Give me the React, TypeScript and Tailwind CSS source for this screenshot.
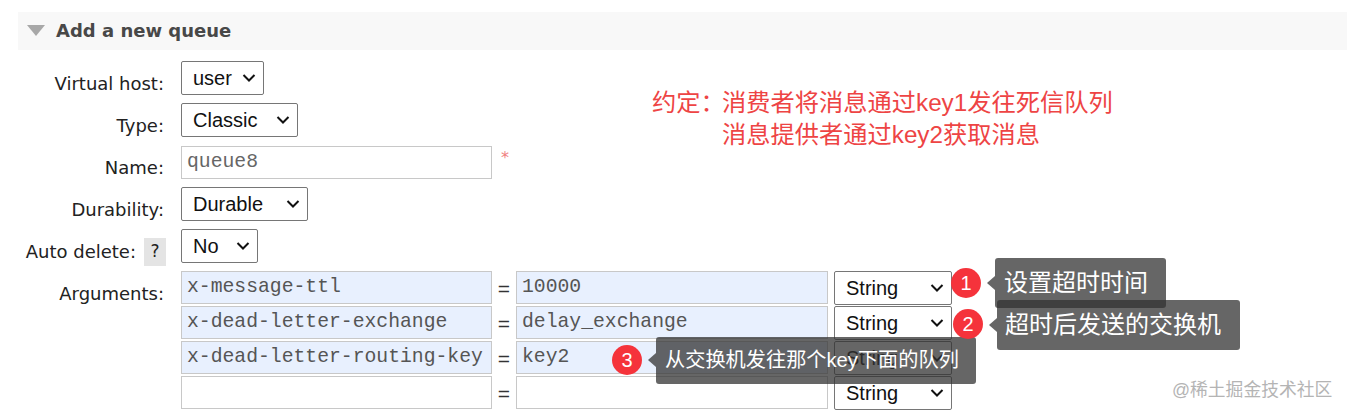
import React from 'react';

const SANS = 'font-["Liberation_Sans",Arial,sans-serif]';
const CJK = 'font-["Liberation_Sans","Noto_Sans_CJK_SC",sans-serif]';

const Select: React.FC<{ value: string; width: string }> = ({ value, width }) => (
  <div className={`flex h-[34px] ${width} items-center justify-between rounded-[2px] border border-[#767676] bg-white pl-[11px] pr-[7px] text-[20px] text-[#111] ${SANS}`}>
    <span>{value}</span>
    <svg width="14" height="10" viewBox="0 0 14 10">
      <polyline points="1.5,2 7,7.5 12.5,2" fill="none" stroke="#111" strokeWidth="2" />
    </svg>
  </div>
);

const Field: React.FC<{ value?: string; filled?: boolean; width: string }> = ({ value, filled, width }) => (
  <div className={`flex h-[33px] ${width} items-center border border-[#c8c8c8] pl-[5px] font-["Liberation_Mono",monospace] text-[19.73px] text-[#555] ${filled ? 'bg-[#e8f0fe]' : 'bg-white'}`}>
    {value}
  </div>
);

const Row: React.FC<{ label: React.ReactNode; children: React.ReactNode }> = ({ label, children }) => (
  <div className="flex h-[42px] items-start">
    <div className="flex h-[36px] w-[166px] items-end justify-end pr-[2px] text-[18px] text-[#222]">{label}</div>
    <div className="ml-[15px]">{children}</div>
  </div>
);

const args = [
  { key: 'x-message-ttl', value: '10000' },
  { key: 'x-dead-letter-exchange', value: 'delay_exchange' },
  { key: 'x-dead-letter-routing-key', value: 'key2' },
  { key: '', value: '' },
];

const Note: React.FC<{ className: string; arrow: string; children: React.ReactNode }> = ({ className, arrow, children }) => (
  <div className={`absolute flex items-center rounded-[3px] bg-[#333]/75 text-white ${CJK} ${className}`}>
    <div className={`absolute left-[-8px] h-0 w-0 border-y-[7px] border-r-[8px] border-y-transparent border-r-[#333]/75 ${arrow}`} />
    {children}
  </div>
);

const Badge: React.FC<{ className: string; children: React.ReactNode }> = ({ className, children }) => (
  <div className={`absolute flex h-[30px] w-[30px] items-center justify-center rounded-full bg-[#f5333b] text-[20px] text-white ${CJK} ${className}`}>
    {children}
  </div>
);

export default function App() {
  return (
    <div className='relative h-[413px] w-[1347px] overflow-hidden bg-white pl-[18px] pt-[12px] font-["DejaVu_Sans",sans-serif]'>
      <div className="flex h-[38px] items-center bg-[#f8f8f8] pb-[1px] pl-[9px]">
        <svg width="18" height="11" viewBox="0 0 18 11">
          <polygon points="0,0 18,0 9,11" fill="#a8a8a8" />
        </svg>
        <h2 className="ml-[11px] text-[18px] font-bold text-[#484848]">Add a new queue</h2>
      </div>

      <div className="-ml-[18px] pt-[11px]">
        <Row label="Virtual host:"><Select value="user" width="w-[83px]" /></Row>
        <Row label="Type:"><Select value="Classic" width="w-[117px]" /></Row>
        <Row label="Name:">
          <div className="flex items-start pt-[1px]">
            <div className={'flex h-[33px] w-[311px] items-center border border-[#c8c8c8] bg-white pl-[5px] font-["Liberation_Mono",monospace] text-[19.73px] text-[#666]'}>queue8</div>
            <span className="ml-[9px] text-[16px] text-[#f08080]">*</span>
          </div>
        </Row>
        <Row label="Durability:"><Select value="Durable" width="w-[127px]" /></Row>
        <Row
          label={
            <>
              <span>Auto delete:</span>
              <span className="-mr-[2px] ml-[8px] flex h-[28px] w-[22px] translate-y-[1px] items-center justify-center bg-[#e4e4e4] text-[17px]">?</span>
            </>
          }
        >
          <Select value="No" width="w-[77px]" />
        </Row>
        <div className="flex items-start">
          <div className="flex h-[36px] w-[166px] items-end justify-end pr-[2px] text-[18px] text-[#222]">Arguments:</div>
          <div className="ml-[15px] flex flex-col">
            {args.map((arg, i) => (
              <div key={i} className="flex h-[35px] items-start">
                <Field value={arg.key} filled={arg.key !== ''} width="w-[311px]" />
                <span className={`flex h-[33px] w-[24px] items-center justify-center pt-[3px] text-[21px] text-[#333] ${SANS}`}>=</span>
                <Field value={arg.value} filled={arg.value !== ''} width="w-[312px]" />
                <div className="ml-[6px]"><Select value="String" width="w-[118px]" /></div>
              </div>
            ))}
          </div>
        </div>
      </div>

      {/* annotations drawn over the form */}
      <div className={`absolute left-[652px] top-[87px] flex text-[24.25px] leading-[32px] text-[#ee4444] ${CJK}`}>
        <span className="w-[70px] whitespace-nowrap">约定：</span>
        <div className="whitespace-nowrap">
          <div>消费者将消息通过key1发往死信队列</div>
          <div>消息提供者通过key2获取消息</div>
        </div>
      </div>

      <Note className="left-[995px] top-[258px] h-[50px] w-[171px] pl-[9px] text-[24px]" arrow="top-[18px]">设置超时时间</Note>
      <Note className="left-[997px] top-[300px] h-[50px] w-[243px] pl-[8px] text-[24px]" arrow="top-[18px]">超时后发送的交换机</Note>
      <Note className="left-[656px] top-[337px] h-[47px] w-[320px] pl-[9px] text-[20.2px]" arrow="top-[16px]">从交换机发往那个key下面的队列</Note>

      <Badge className="left-[951px] top-[268px]">1</Badge>
      <Badge className="left-[953px] top-[309px]">2</Badge>
      <Badge className="left-[612px] top-[345px]">3</Badge>

      <div className={`absolute left-[1172px] top-[377px] text-[17.8px] text-[#b4b4b4] ${CJK}`}>@稀土掘金技术社区</div>
    </div>
  );
}
